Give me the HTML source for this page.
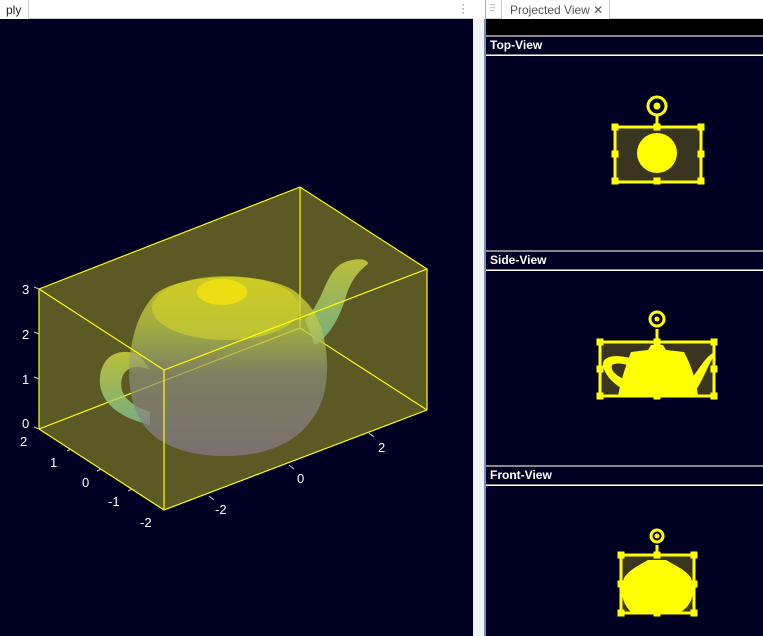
<!DOCTYPE html>
<html><head><meta charset="utf-8"><style>
*{margin:0;padding:0;box-sizing:border-box}
body{width:763px;height:636px;overflow:hidden;background:#fff;font-family:"Liberation Sans",sans-serif;position:relative}
.abs{position:absolute}
.hdr{position:absolute;left:486px;width:277px;height:20px;background:#000022;border-top:2px solid #888;border-bottom:1px solid #888;color:#fff;font-size:12px;font-weight:bold;padding:1px 0 0 4px}
.pane{position:absolute;left:486px;width:277px;background:#000022}
</style></head><body>
<div class="abs" style="left:0;top:0;width:473px;height:19px;background:#fff;border-bottom:1px solid #ccc"></div>
<div class="abs" style="left:0;top:0;width:29px;height:19px;background:#fff;border-right:1px solid #ccc;font-size:12px;padding:3px 0 0 6px;color:#222">ply</div>
<div class="abs" style="left:461px;top:2px;font-size:12px;color:#666;line-height:4px">·<br>·<br>·</div>
<div class="abs" style="left:485px;top:0;width:278px;height:19px;background:#fff;border-bottom:1px solid #ccc;border-left:1px solid #aaa"></div>
<div class="abs" style="left:490px;top:3px;font-size:9px;color:#888;line-height:3px">–<br>–<br>–</div>
<div class="abs" style="left:501px;top:0;width:109px;height:19px;background:#fff;border-left:1px solid #ccc;border-right:1px solid #ccc;font-size:12px;color:#555;padding:3px 0 0 8px">Projected View ✕</div>
<div class="abs" style="left:0;top:19px;width:473px;height:617px;background:#000022"></div>
<div class="abs" style="left:473px;top:19px;width:11px;height:617px;background:#f2f2f2"></div>
<div class="abs" style="left:484px;top:19px;width:2px;height:617px;background:#6f8fc0"></div>
<svg class="abs" style="left:0;top:0" width="473" height="636">
<defs>
<linearGradient id="tg" x1="0" y1="0" x2="0" y2="1">
<stop offset="0" stop-color="#e8e020"/><stop offset="0.3" stop-color="#b8c850"/><stop offset="0.55" stop-color="#8a8c78"/><stop offset="1" stop-color="#847a8c"/></linearGradient>
<linearGradient id="hg" x1="0" y1="0" x2="0" y2="1"><stop offset="0" stop-color="#d8e040"/><stop offset="1" stop-color="#80c8a0"/></linearGradient>
</defs>
<polygon points="39,289 300,187 427,269 427,410 164,510 39,429" fill="#5c5a24"/>
<line x1="300" y1="187" x2="300" y2="328" stroke="#ffff00" stroke-width="1.2"/>
<line x1="39" y1="429" x2="300" y2="328" stroke="#ffff00" stroke-width="1.2"/>
<line x1="300" y1="328" x2="427" y2="410" stroke="#ffff00" stroke-width="1.2"/>
<path d="M305,320 C325,300 325,270 345,262 C355,258 368,258 368,264 C360,270 350,280 345,300 C338,320 330,335 315,345 Z" fill="url(#hg)" opacity="0.75"/>
<path d="M140,355 C115,345 98,360 100,385 C104,410 130,420 150,425 L150,412 C130,405 118,395 122,378 C126,365 140,365 150,370 Z" fill="url(#hg)" opacity="0.75"/>
<path d="M152,298 C170,272 280,268 302,298 C330,320 335,385 315,415 C298,442 268,456 225,456 C182,456 150,442 138,415 C122,385 128,325 152,298 Z" fill="url(#tg)" opacity="0.72"/>
<ellipse cx="226" cy="308" rx="74" ry="32" fill="#d8d828" opacity="0.55"/>
<ellipse cx="222" cy="292" rx="25" ry="13" fill="#f0e010" opacity="0.9"/>
<polygon points="39,289 300,187 427,269 164,370" fill="none" stroke="#ffff00" stroke-width="1.2"/>
<line x1="39" y1="289" x2="39" y2="429" stroke="#ffff00" stroke-width="1.2"/>
<line x1="427" y1="269" x2="427" y2="410" stroke="#ffff00" stroke-width="1.2"/>
<line x1="164" y1="370" x2="164" y2="510" stroke="#ffff00" stroke-width="1.2"/>
<polyline points="39,429 164,510 427,410" fill="none" stroke="#ffff00" stroke-width="1.2"/>
<g fill="#fff" font-size="13" font-family="Liberation Sans">
<text x="22" y="294">3</text><text x="22" y="339">2</text><text x="22" y="384">1</text><text x="22" y="428">0</text>
<text x="20" y="446">2</text><text x="50" y="467">1</text><text x="82" y="487">0</text><text x="108" y="506">-1</text><text x="140" y="527">-2</text>
<text x="215" y="514">-2</text><text x="297" y="483">0</text><text x="378" y="452">2</text>
</g>
<g stroke="#ccc" stroke-width="1">
<line x1="34" y1="287" x2="39" y2="289"/><line x1="34" y1="332" x2="39" y2="334"/><line x1="34" y1="377" x2="39" y2="379"/><line x1="34" y1="427" x2="39" y2="429"/>
<line x1="67" y1="451" x2="71" y2="449"/><line x1="97" y1="471" x2="101" y2="469"/><line x1="128" y1="491" x2="132" y2="489"/>
<line x1="209" y1="496" x2="214" y2="500"/><line x1="289" y1="465" x2="294" y2="469"/><line x1="369" y1="433" x2="374" y2="437"/>
</g>
</svg>
<div class="abs" style="left:486px;top:19px;width:277px;height:17px;background:#000"></div>
<div class="hdr" style="top:35px">Top-View</div>
<div class="pane" style="top:56px;height:194px"></div>
<div class="hdr" style="top:250px">Side-View</div>
<div class="pane" style="top:271px;height:194px"></div>
<div class="hdr" style="top:465px">Front-View</div>
<div class="pane" style="top:486px;height:150px"></div>
<svg class="abs" style="left:486px;top:0" width="277" height="636">
<g stroke="#ffff00" fill="#ffff00">
<rect x="129" y="127" width="86" height="55" fill="#3a3520" stroke-width="3"/>
<circle cx="171" cy="153" r="20" stroke="none"/>
<line x1="171" y1="127" x2="171" y2="116" stroke-width="3"/>
<circle cx="171" cy="106" r="9" fill="none" stroke-width="3"/><circle cx="171" cy="106" r="3"/>
<rect x="126" y="124" width="6" height="6"/><rect x="168" y="124" width="6" height="6"/><rect x="212" y="124" width="6" height="6"/>
<rect x="126" y="151" width="6" height="6"/><rect x="212" y="151" width="6" height="6"/>
<rect x="126" y="178" width="6" height="6"/><rect x="168" y="178" width="6" height="6"/><rect x="212" y="178" width="6" height="6"/>
<rect x="114" y="342" width="114" height="54" fill="#3a3520" stroke-width="3"/>
<path d="M165,345 L177,345 L180,350 L198,352 C205,365 210,380 212,396 L132,396 C135,380 140,365 145,352 L162,350 Z" stroke="none"/>
<path d="M145,358 C128,354 116,356 117,366 C120,378 130,385 138,390 L140,380 C130,376 124,370 126,365 C130,362 140,364 143,366 Z" stroke="none"/>
<path d="M206,378 C212,370 218,360 224,355 L228,352 L227,358 C222,365 218,378 210,390 Z" stroke="none"/>
<line x1="171" y1="342" x2="171" y2="329" stroke-width="3"/>
<circle cx="171" cy="319" r="7" fill="none" stroke-width="3"/><circle cx="171" cy="319" r="2"/>
<rect x="111" y="339" width="6" height="6"/><rect x="168" y="339" width="6" height="6"/><rect x="225" y="339" width="6" height="6"/>
<rect x="111" y="366" width="6" height="6"/><rect x="225" y="366" width="6" height="6"/>
<rect x="111" y="393" width="6" height="6"/><rect x="168" y="393" width="6" height="6"/><rect x="225" y="393" width="6" height="6"/>
<rect x="135" y="555" width="73" height="58" fill="#3a3520" stroke-width="3"/>
<path d="M162,560 L180,560 C190,566 200,570 205,578 C210,595 205,605 195,612 L145,612 C138,605 133,595 138,578 C143,570 152,566 162,560 Z" stroke="none"/>
<line x1="171" y1="555" x2="171" y2="545" stroke-width="3"/>
<circle cx="171" cy="536" r="6" fill="none" stroke-width="3"/><circle cx="171" cy="536" r="2"/>
<rect x="132" y="552" width="6" height="6"/><rect x="168" y="552" width="6" height="6"/><rect x="205" y="552" width="6" height="6"/>
<rect x="132" y="581" width="6" height="6"/><rect x="205" y="581" width="6" height="6"/>
<rect x="132" y="610" width="6" height="6"/><rect x="168" y="610" width="6" height="6"/><rect x="205" y="610" width="6" height="6"/>
</g>
</svg>
</body></html>
